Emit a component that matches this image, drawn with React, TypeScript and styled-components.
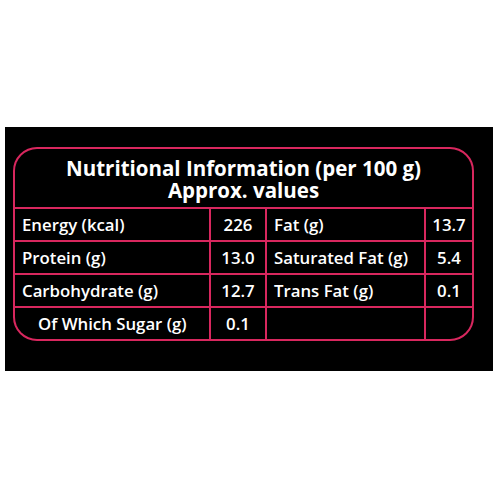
import { createGlobalStyle } from "styled-components";
import { styled } from "styled-components";

const GlobalStyle = createGlobalStyle`
    body {
        margin: 0;
        background: #ffffff;
        font-family: "Open Sans", "Lato", sans-serif;
    }
`;

const Page = styled.div`
    width: 500px;
    height: 500px;
    padding: 127px 0 0 5px;
    box-sizing: border-box;
`;

const Panel = styled.div`
    width: 488px;
    height: 244px;
    background: #000000;
    padding: 20px 0 0 8px;
    box-sizing: border-box;
`;

const Table = styled.div`
    width: 461px;
    box-sizing: border-box;
    border: 2px solid #d8275e;
    border-radius: 24px;
    overflow: hidden;
    background: #d8275e;
    display: grid;
    grid-template-columns: 194px 54px 157px 1fr;
    grid-template-rows: 58px repeat(4, 31px);
    gap: 2px;
`;

const Header = styled.div`
    grid-column: 1 / -1;
    background: #000;
    color: #fff;
    font-weight: 700;
    font-size: 20.5px;
    line-height: 22px;
    text-align: center;
    display: flex;
    flex-direction: column;
    justify-content: center;
    padding-top: 1px;
`;

const Cell = styled.div<{ $center?: boolean; $indent?: boolean }>`
    background: #000;
    color: #fff;
    font-weight: 600;
    font-size: 16.8px;
    display: flex;
    align-items: center;
    justify-content: ${(p) => (p.$center ? "center" : "flex-start")};
    padding-left: ${(p) => (p.$center ? "0" : p.$indent ? "23px" : "7px")};
    white-space: nowrap;
`;

const rows = [
    ["Energy (kcal)", "226", "Fat (g)", "13.7"],
    ["Protein (g)", "13.0", "Saturated Fat (g)", "5.4"],
    ["Carbohydrate (g)", "12.7", "Trans Fat (g)", "0.1"],
    ["Of Which Sugar (g)", "0.1", "", ""],
];

export default function App() {
    return (
        <Page>
            <GlobalStyle />
            <Panel>
                <Table>
                    <Header>
                        <div>Nutritional Information (per 100 g)</div>
                        <div>Approx. values</div>
                    </Header>
                    {rows.map((r, i) => (
                        <>
                            <Cell key={i + "a"} $indent={i === 3}>{r[0]}</Cell>
                            <Cell key={i + "b"} $center>{r[1]}</Cell>
                            <Cell key={i + "c"}>{r[2]}</Cell>
                            <Cell key={i + "d"} $center>{r[3]}</Cell>
                        </>
                    ))}
                </Table>
            </Panel>
        </Page>
    );
}
